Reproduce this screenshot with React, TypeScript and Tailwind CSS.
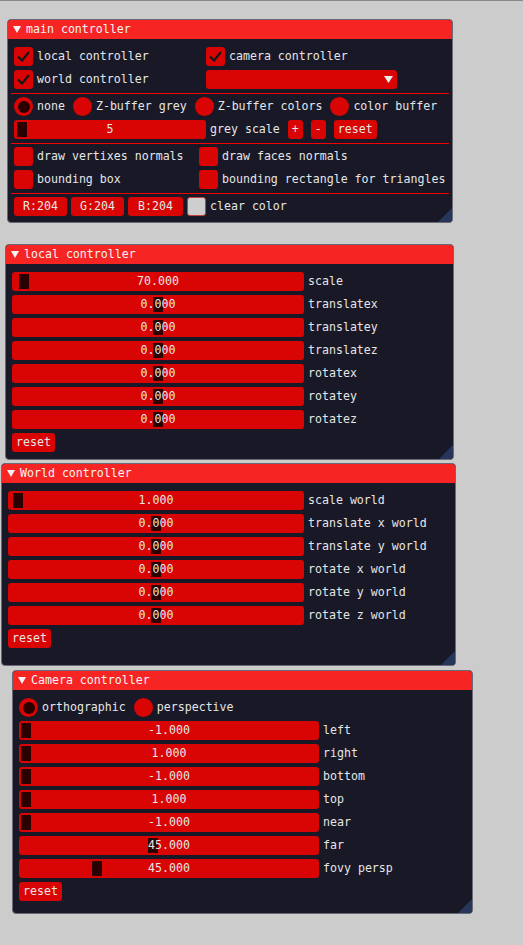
import type { ReactNode } from "react";

const FONT = "font-['DejaVu_Sans_Mono','Liberation_Mono',monospace] text-[11.6px] leading-[13px]";

function Win({ pos, title, children }: { pos: string; title: string; children: ReactNode }) {
  return (
    <div className={`absolute flex flex-col overflow-hidden rounded-[4px] border border-[#6a6a76] bg-[#181826] ${pos}`}>
      <div className="flex h-[19px] shrink-0 items-center gap-[5px] bg-[#f72424] pl-[5px] text-[#f4f4f4]">
        <svg width="8" height="7" viewBox="0 0 8 7">
          <polygon points="0,0 8,0 4,7" fill="#f4f4f4" />
        </svg>
        <span>{title}</span>
      </div>
      <div className="flex flex-col gap-[4px] px-[6px] pt-[8px] text-[#e6e6e6]">{children}</div>
      {/* resize grip */}
      <svg className="absolute right-0 bottom-0" width="14" height="14" viewBox="0 0 14 14">
        <polygon points="14,0 14,14 0,14" fill="#25365a" />
      </svg>
    </div>
  );
}

function Check({ on, label }: { on?: boolean; label: string }) {
  return (
    <div className="flex h-[19px] items-center gap-[4px]">
      <div className="h-[19px] w-[19px] rounded-[3px] bg-[#d90404]">
        {on && (
          <svg width="19" height="19" viewBox="0 0 19 19">
            <polyline points="4,9.5 8,13.5 15,5" fill="none" stroke="#1c1416" strokeWidth="2.2" />
          </svg>
        )}
      </div>
      <span className="whitespace-nowrap">{label}</span>
    </div>
  );
}

function Radio({ on, label }: { on?: boolean; label: string }) {
  return (
    <div className="flex h-[19px] items-center gap-[4px]">
      <div className="flex h-[19px] w-[19px] items-center justify-center rounded-full bg-[#d90404]">
        {on && <div className="h-[12px] w-[12px] rounded-full bg-[#2a0000]" />}
      </div>
      <span className="whitespace-nowrap">{label}</span>
    </div>
  );
}

function Btn({ children, w }: { children: ReactNode; w?: string }) {
  return (
    <div className={`flex h-[19px] items-center justify-center rounded-[3px] bg-[#d90404] px-[4px] ${w ?? ""}`}>
      {children}
    </div>
  );
}

function Slider({ value, grab, w, label }: { value: string; grab: number; w: string; label?: string }) {
  return (
    <div className="flex h-[19px] items-center gap-[4px]">
      <div className={`relative h-[19px] shrink-0 rounded-[3px] bg-[#d90404] ${w}`}>
        <div className="absolute top-[2px] h-[15px] w-[10px] bg-[#2a0000]" style={{ left: grab }} />
        <div className="absolute inset-0 flex items-center justify-center">{value}</div>
      </div>
      {label && <span className="whitespace-nowrap">{label}</span>}
    </div>
  );
}

function Sep() {
  return <div className="-mx-[3px] -mb-[1px] h-px bg-[#f50000]" />;
}

const LOCAL = [
  ["70.000", 7, "scale"],
  ["0.000", 141, "translatex"],
  ["0.000", 141, "translatey"],
  ["0.000", 141, "translatez"],
  ["0.000", 141, "rotatex"],
  ["0.000", 141, "rotatey"],
  ["0.000", 141, "rotatez"],
] as const;

const WORLD = [
  ["1.000", 5, "scale world"],
  ["0.000", 143, "translate x world"],
  ["0.000", 143, "translate y world"],
  ["0.000", 143, "rotate x world"],
  ["0.000", 143, "rotate y world"],
  ["0.000", 143, "rotate z world"],
] as const;

const CAMERA = [
  ["-1.000", 2, "left"],
  ["1.000", 2, "right"],
  ["-1.000", 2, "bottom"],
  ["1.000", 2, "top"],
  ["-1.000", 2, "near"],
  ["45.000", 129, "far"],
  ["45.000", 73, "fovy persp"],
] as const;

export default function App() {
  return (
    <div className={`relative h-[945px] w-[523px] overflow-hidden border-t border-[#8a8a8a] bg-[#cccccc] ${FONT}`}>
      <Win pos="left-[7px] top-[18px] w-[446px] h-[204px]" title="main controller">
        <div className="flex">
          <div className="w-[192px]"><Check on label="local controller" /></div>
          <Check on label="camera controller" />
        </div>
        <div className="flex">
          <div className="w-[192px]"><Check on label="world controller" /></div>
          <div className="relative h-[19px] w-[191px] rounded-[3px] bg-[#d90404]">
            <svg className="absolute top-[6px] right-[4px]" width="9" height="7" viewBox="0 0 9 7">
              <polygon points="0,0 9,0 4.5,7" fill="#ececec" />
            </svg>
          </div>
        </div>
        <Sep />
        <div className="flex gap-[8px]">
          <Radio on label="none" />
          <Radio label="Z-buffer grey" />
          <Radio label="Z-buffer colors" />
          <Radio label="color buffer" />
        </div>
        <div className="flex items-center gap-[8px]">
          <Slider value="5" grab={3} w="w-[192px]" label="grey scale" />
          <Btn w="w-[15px]">+</Btn>
          <Btn w="w-[15px]">-</Btn>
          <Btn>reset</Btn>
        </div>
        <Sep />
        <div className="flex">
          <div className="w-[185px]"><Check label="draw vertixes normals" /></div>
          <Check label="draw faces normals" />
        </div>
        <div className="flex">
          <div className="w-[185px]"><Check label="bounding box" /></div>
          <Check label="bounding rectangle for triangles" />
        </div>
        <Sep />
        <div className="flex items-center gap-[4px]">
          <Btn w="w-[53px]">R:204</Btn>
          <Btn w="w-[53px]">G:204</Btn>
          <Btn w="w-[55px]">B:204</Btn>
          <div className="h-[19px] w-[19px] rounded-[3px] border border-[#c04040] bg-[#cecece]" />
          <span>clear color</span>
        </div>
      </Win>

      <Win pos="left-[5px] top-[243px] w-[449px] h-[216px]" title="local controller">
        {LOCAL.map(([v, g, l]) => (
          <Slider key={l} value={v} grab={g} w="w-[292px]" label={l} />
        ))}
        <div className="flex"><Btn>reset</Btn></div>
      </Win>

      <Win pos="left-[1px] top-[462px] w-[455px] h-[203px]" title="World controller">
        {WORLD.map(([v, g, l]) => (
          <Slider key={l} value={v} grab={g} w="w-[296px]" label={l} />
        ))}
        <div className="flex"><Btn>reset</Btn></div>
      </Win>

      <Win pos="left-[12px] top-[669px] w-[461px] h-[244px]" title="Camera controller">
        <div className="flex gap-[8px]">
          <Radio on label="orthographic" />
          <Radio label="perspective" />
        </div>
        {CAMERA.map(([v, g, l]) => (
          <Slider key={l} value={v} grab={g} w="w-[300px]" label={l} />
        ))}
        <div className="flex"><Btn>reset</Btn></div>
      </Win>
    </div>
  );
}
